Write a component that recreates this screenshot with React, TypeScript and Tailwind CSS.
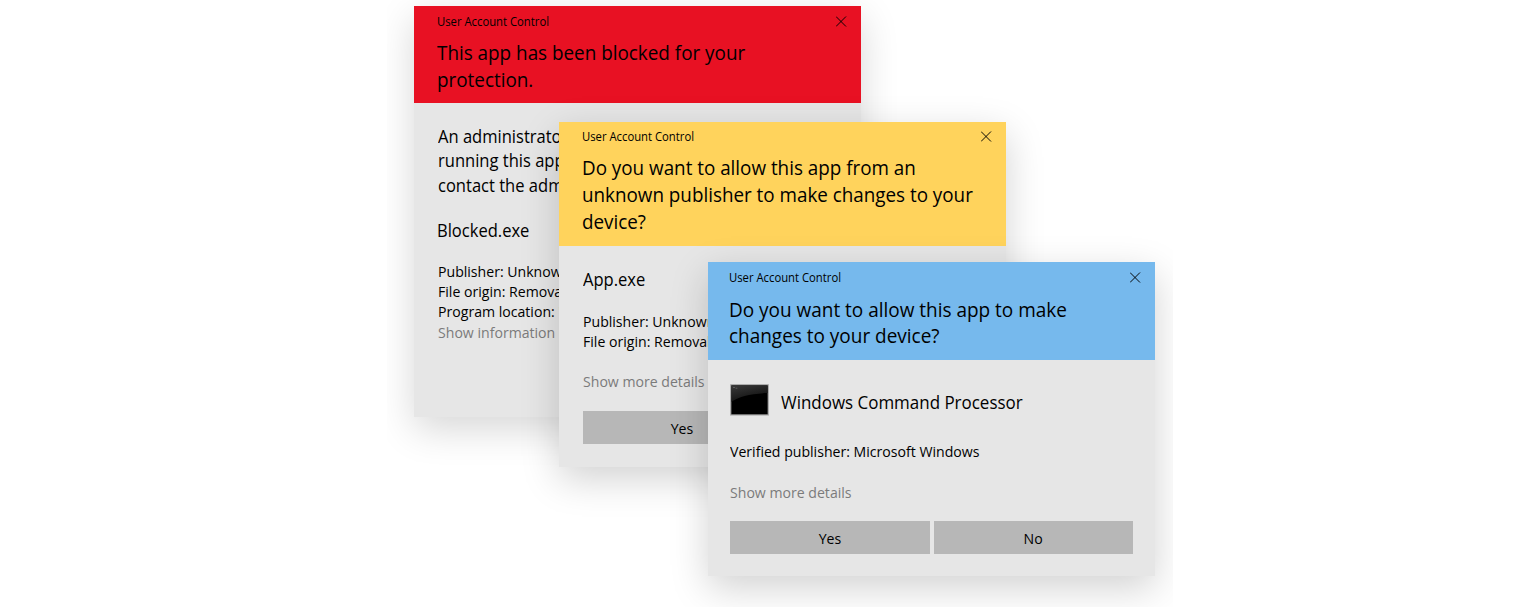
import type { ReactNode } from "react";

function CloseIcon() {
  return (
    <svg className="mt-[2px] size-[11px] shrink-0" viewBox="0 0 11 11" fill="none" stroke="currentColor" strokeWidth="0.95">
      <path d="M0 0.5 L10 10.5 M10 0.5 L0 10.5" />
    </svg>
  );
}

function ConsoleIcon() {
  return (
    <svg className="h-[32px] w-[39px] shrink-0" viewBox="0 0 39 32">
      <defs>
        <linearGradient id="gloss" x1="0" y1="0" x2="0.5" y2="1">
          <stop offset="0" stopColor="#3a3a3a" />
          <stop offset="1" stopColor="#0e0e0e" />
        </linearGradient>
      </defs>
      <rect x="0" y="0" width="39" height="32" fill="#c4c4c4" />
      <rect x="0.6" y="0.6" width="37.8" height="30.4" fill="#8d8d8d" />
      <rect x="1.4" y="1.4" width="36.2" height="28.8" fill="#000" />
      <path d="M1.4 1.4 H37.6 V9 C22 9.5 8 12.5 1.4 18 Z" fill="url(#gloss)" />
      <path d="M3 3.5 H5 M5.6 4.2 H7.4" stroke="#666" strokeWidth="0.8" />
    </svg>
  );
}

type HeaderProps = { color: string; top: string; lines: string; children: ReactNode };

function Header({ color, top, lines, children }: HeaderProps) {
  return (
    <header className={`flex shrink-0 flex-col ${color}`}>
      <div className={`flex justify-between pr-[14px] ${top}`}>
        <span className="origin-left scale-x-[0.94] text-[12px] leading-[16px]">User Account Control</span>
        <CloseIcon />
      </div>
      <h1 className={`origin-left text-[20px] whitespace-nowrap ${lines}`}>{children}</h1>
    </header>
  );
}

function DialogButton({ children }: { children: ReactNode }) {
  return (
    <button className="h-[33px] w-[199.5px] bg-[#b7b7b7] text-center text-[15px] leading-[34px]">
      <span className="inline-block scale-x-[0.94]">{children}</span>
    </button>
  );
}

const panel = "absolute flex w-[447px] flex-col overflow-hidden bg-[#e6e6e6] text-black";
const body = "origin-left scale-x-[0.94] text-[15px]";
const name = "origin-left scale-x-[0.945] text-[17.5px] leading-[24px]";

export default function App() {
  return (
    <main className="flex h-[608px] w-full justify-start overflow-hidden bg-white pl-[387px] font-['Open_Sans','Noto_Sans',sans-serif]">
      <div className="relative h-[607px] w-[786px] overflow-hidden">
        <section className={`${panel} left-[27px] top-[6px] h-[411px] shadow-[0_12px_36px_rgba(0,0,0,0.16)]`}>
          <Header color="h-[97px] bg-[#e81123] pl-[23px]" top="pt-[8px]" lines="mt-[10px] leading-[26.5px] scale-x-[0.943]">
            This app has been blocked for your
            <br />
            protection.
          </Header>
          <div className="flex flex-col pl-[23px] pt-[21px] whitespace-nowrap">
            <p className="ml-[0.5px] origin-left scale-x-[0.945] text-[17.5px] leading-[24.4px]">
              An administrator
              <br />
              running this app
              <br />
              contact the admin
            </p>
            <h2 className={`${name} mt-[21px]`}>Blocked.exe</h2>
            <p className={`${body} mt-[19px] ml-px leading-[20.1px]`}>
              Publisher: Unknown
              <br />
              File origin: Removable
              <br />
              Program location: "
              <br />
              <span className="text-[#7b7b7b]">Show information a</span>
            </p>
          </div>
        </section>

        <section className={`${panel} left-[172px] top-[122px] h-[345px] shadow-[0_12px_36px_rgba(0,0,0,0.18)]`}>
          <Header color="h-[123.5px] bg-[#ffd35c] pl-[22.5px]" top="pt-[7px]" lines="mt-[9px] leading-[27px] scale-x-[0.941]">
            Do you want to allow this app from an
            <br />
            unknown publisher to make changes to your
            <br />
            device?
          </Header>
          <div className="flex flex-col px-[23.5px] pt-[21.5px] whitespace-nowrap">
            <h2 className={name}>App.exe</h2>
            <p className={`${body} mt-[20px] leading-[20.2px]`}>
              Publisher: Unknown
              <br />
              File origin: Removable
            </p>
            <p className={`${body} mt-[20px] leading-[20px] text-[#7b7b7b]`}>Show more details</p>
            <div className="mt-[19.5px] flex">
              <DialogButton>Yes</DialogButton>
            </div>
          </div>
        </section>

        <section className={`${panel} left-[321px] top-[262px] h-[314px] shadow-[0_12px_36px_rgba(0,0,0,0.18)]`}>
          <Header color="h-[98px] bg-[#76b9ed] pl-[21px]" top="pt-[8px]" lines="mt-[11px] leading-[26.3px] scale-x-[0.948]">
            Do you want to allow this app to make
            <br />
            changes to your device?
          </Header>
          <div className="flex flex-col px-[22px] pt-[24px] whitespace-nowrap">
            <div className="flex items-center gap-[12px]">
              <ConsoleIcon />
              <h2 className="origin-left scale-x-[0.942] pt-[3px] text-[18px] leading-[24px]">Windows Command Processor</h2>
            </div>
            <p className={`${body} mt-[25.3px] leading-[20px]`}>Verified publisher: Microsoft Windows</p>
            <p className={`${body} mt-[20.5px] leading-[20px] text-[#7b7b7b]`}>Show more details</p>
            <div className="mt-[19.2px] flex gap-[4px]">
              <DialogButton>Yes</DialogButton>
              <DialogButton>No</DialogButton>
            </div>
          </div>
        </section>
      </div>
    </main>
  );
}
